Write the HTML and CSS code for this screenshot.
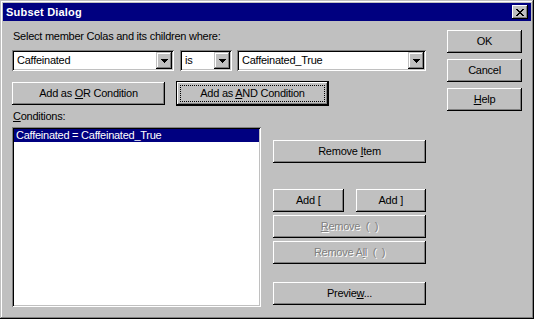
FILE: index.html
```html
<!DOCTYPE html>
<html>
<head>
<meta charset="utf-8">
<link rel="stylesheet" href="styles.css">
</head>
<body>
<div class="window">
  <div class="titlebar">
    <span class="title">Subset Dialog</span>
    <span class="close">
      <svg width="8" height="7" viewBox="0 0 8 7" shape-rendering="crispEdges"><path d="M0 0h2v1h-2zM6 0h2v1h-2zM1 1h2v1h-2zM5 1h2v1h-2zM2 2h4v1h-4zM3 3h2v1h-2zM2 4h4v1h-4zM1 5h2v1h-2zM5 5h2v1h-2zM0 6h2v1h-2zM6 6h2v1h-2z" fill="#000"/></svg>
    </span>
  </div>
  <div class="content">
    <div class="main">
      <div class="label">Select member Colas and its children where:</div>
      <div class="combos">
        <div class="combo c1"><span class="val">Caffeinated</span><span class="drop"><svg width="7" height="4" viewBox="0 0 7 4" shape-rendering="crispEdges"><path d="M0 0h7v1h-7zM1 1h5v1h-5zM2 2h3v1h-3zM3 3h1v1h-1z" fill="#000"/></svg></span></div>
        <div class="combo c2"><span class="val">is</span><span class="drop"><svg width="7" height="4" viewBox="0 0 7 4" shape-rendering="crispEdges"><path d="M0 0h7v1h-7zM1 1h5v1h-5zM2 2h3v1h-3zM3 3h1v1h-1z" fill="#000"/></svg></span></div>
        <div class="combo c3"><span class="val">Caffeinated_True</span><span class="drop"><svg width="7" height="4" viewBox="0 0 7 4" shape-rendering="crispEdges"><path d="M0 0h7v1h-7zM1 1h5v1h-5zM2 2h3v1h-3zM3 3h1v1h-1z" fill="#000"/></svg></span></div>
      </div>
      <div class="addrow">
        <div class="btn or"><span>Add as <u>O</u>R Condition</span></div>
        <div class="btn default"><span>Add as <u>A</u>ND Condition</span></div>
      </div>
      <div class="label cond"><u>C</u>onditions:</div>
      <div class="lower">
        <div class="listbox">
          <div class="item sel">Caffeinated = Caffeinated_True</div>
        </div>
        <div class="actions">
          <div class="btn remove-item"><span>Remove <u>I</u>tem</span></div>
          <div class="pair">
            <div class="btn"><span>Add [</span></div>
            <div class="btn"><span>Add ]</span></div>
          </div>
          <div class="btn disabled gap3"><span><u>R</u>emove&nbsp; (&nbsp;&nbsp;)</span></div>
          <div class="btn disabled gap3"><span>Remove A<u>l</u>l&nbsp; (&nbsp;&nbsp;)</span></div>
          <div class="btn preview"><span>Previe<u>w</u>...</span></div>
        </div>
      </div>
    </div>
    <div class="side">
      <div class="btn"><span>OK</span></div>
      <div class="btn"><span>Cancel</span></div>
      <div class="btn"><span><u>H</u>elp</span></div>
    </div>
  </div>
</div>
</body>
</html>
```

FILE: styles.css
```css
html, body {
  margin: 0;
  padding: 0;
  background: #c0c0c0;
}

body {
  font-family: "Liberation Sans", Arial, sans-serif;
  font-size: 11px;
  line-height: 13px;
  letter-spacing: -0.25px;
  color: #000;
}

.window {
  width: 534px;
  height: 319px;
  box-sizing: border-box;
  padding: 3px;
  background: #c0c0c0;
  box-shadow: inset -1px -1px #000, inset 1px 1px #c0c0c0, inset -2px -2px #808080, inset 2px 2px #fff;
  display: flex;
  flex-direction: column;
}

.titlebar {
  height: 18px;
  background: #000080;
  color: #fff;
  display: flex;
  align-items: center;
  justify-content: space-between;
  padding-left: 3px;
  padding-right: 3px;
}

.title {
  font-weight: bold;
  line-height: 18px;
  letter-spacing: 0.2px;
}

.close {
  width: 16px;
  height: 14px;
  box-sizing: border-box;
  background: #c0c0c0;
  box-shadow: inset -1px -1px #000, inset 1px 1px #fff, inset -2px -2px #808080;
  display: flex;
  align-items: center;
  justify-content: center;
}

.content {
  flex: 1;
  display: flex;
  padding: 9px 9px 0 9px;
  gap: 21px;
}

.main {
  width: 414px;
  display: flex;
  flex-direction: column;
}

.label {
  height: 13px;
  padding-left: 1px;
}

.combos {
  margin-top: 7px;
  display: flex;
  height: 21px;
}

.combo {
  height: 21px;
  box-sizing: border-box;
  background: #fff;
  box-shadow: inset 1px 1px #808080, inset -1px -1px #fff, inset 2px 2px #000, inset -2px -2px #c0c0c0;
  display: flex;
  align-items: center;
  padding: 2px;
}

.c1 { width: 162px; }
.c2 { width: 52px; margin-left: 6px; }
.c3 { width: 189px; margin-left: 5px; }

.val {
  flex: 1;
  padding-left: 3px;
  white-space: nowrap;
  overflow: hidden;
}

.drop {
  width: 16px;
  height: 17px;
  box-sizing: border-box;
  background: #c0c0c0;
  box-shadow: inset -1px -1px #000, inset 1px 1px #c0c0c0, inset -2px -2px #808080, inset 2px 2px #fff;
  display: flex;
  align-items: center;
  justify-content: center;
  padding-top: 1px;
}

.btn {
  height: 23px;
  box-sizing: border-box;
  background: #c0c0c0;
  box-shadow: inset -1px -1px #000, inset 1px 1px #fff, inset -2px -2px #808080;
  display: flex;
  align-items: center;
  justify-content: center;
  white-space: nowrap;
}

.btn u {
  text-decoration: underline;
  text-underline-offset: 1px;
}

.addrow {
  margin-top: 10px;
  display: flex;
  align-items: flex-start;
  gap: 11px;
}

.addrow .or {
  width: 153px;
  margin-top: 1px;
}

.addrow .default {
  width: 153px;
  height: 25px;
  position: relative;
  box-shadow: inset 0 0 0 1px #000, inset -2px -2px #000, inset 2px 2px #fff, inset -3px -3px #808080;
}

.addrow .default::after {
  content: "";
  position: absolute;
  left: 4px;
  top: 4px;
  right: 4px;
  bottom: 4px;
  border: 1px dotted #000;
}

.cond {
  margin-top: 4px;
}

.lower {
  margin-top: 4px;
  display: flex;
  gap: 12px;
}

.listbox {
  width: 249px;
  height: 180px;
  box-sizing: border-box;
  padding: 2px;
  background: #fff;
  box-shadow: inset 1px 1px #808080, inset -1px -1px #fff, inset 2px 2px #000, inset -2px -2px #c0c0c0;
}

.item {
  height: 13px;
  padding-left: 2px;
  white-space: nowrap;
}

.item.sel {
  background: #000080;
  color: #fff;
}

.actions {
  width: 153px;
  display: flex;
  flex-direction: column;
  padding-top: 13px;
}

.pair {
  margin-top: 26px;
  display: grid;
  grid-template-columns: 1fr 1fr;
  gap: 12px;
}

.gap3 {
  margin-top: 3px;
}

.disabled {
  color: #808080;
  text-shadow: 1px 1px 0 #fff;
}

.preview {
  margin-top: 18px;
}

.side {
  width: 75px;
  display: flex;
  flex-direction: column;
  gap: 6px;
}
```
